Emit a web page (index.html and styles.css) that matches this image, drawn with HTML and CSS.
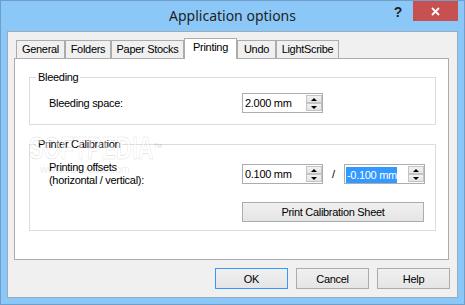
FILE: index.html
```html
<!DOCTYPE html>
<html lang="en">
<head>
    <meta charset="UTF-8">
    <title>Application options</title>
    <link rel="stylesheet" href="styles.css">
</head>
<body>
  <div class="window">
    <!-- Title bar -->
    <div class="titlebar">
      <span></span>
      <div class="title">Application options</div>
      <div class="controls">
        <button class="help-btn">?</button>
        <button class="close-btn">
          <svg width="9" height="9" viewBox="0 0 9 9"><path d="M1 1L8 8M8 1L1 8" stroke="#fff" stroke-width="1.8" fill="none"/></svg>
        </button>
      </div>
    </div>

    <div class="client">
      <div class="tabs">
        <div class="tab tab-general">General</div>
        <div class="tab tab-folders">Folders</div>
        <div class="tab tab-stocks">Paper Stocks</div>
        <div class="tab tab-printing tab-active">Printing</div>
        <div class="tab tab-undo">Undo</div>
        <div class="tab tab-lightscribe">LightScribe</div>
      </div>

      <div class="panel">
        <fieldset class="group group-bleeding">
          <legend>Bleeding</legend>
          <div class="row">
            <label class="field-label">Bleeding space:</label>
            <div class="spin">
              <span class="spin-value">2.000 mm</span>
              <span class="spin-arrows"><span class="spin-btn spin-up"></span><span class="spin-btn spin-down"></span></span>
            </div>
          </div>
        </fieldset>

        <fieldset class="group group-calibration">
          <legend>Printer Calibration</legend>
          <div class="row">
            <label class="field-label field-label-two">Printing offsets<br>(horizontal / vertical):</label>
            <div class="spin">
              <span class="spin-value">0.100 mm</span>
              <span class="spin-arrows"><span class="spin-btn spin-up"></span><span class="spin-btn spin-down"></span></span>
            </div>
            <span class="slash">/</span>
            <div class="spin">
              <span class="spin-value"><span class="selected">-0.100 mm</span></span>
              <span class="spin-arrows"><span class="spin-btn spin-up"></span><span class="spin-btn spin-down"></span></span>
            </div>
          </div>
          <div class="row row-button">
            <button class="btn btn-wide">Print Calibration Sheet</button>
          </div>
        </fieldset>

        <div class="watermark">SOFTPEDIA<span class="tm">™</span></div>
        <div class="watermark-url">www.softpedia.com</div>
      </div>

      <div class="footer">
        <button class="btn btn-default">OK</button>
        <button class="btn">Cancel</button>
        <button class="btn">Help</button>
      </div>
    </div>
  </div>
</body>
</html>
```

FILE: styles.css
```css
* {
    box-sizing: border-box;
}

body {
    margin: 0;
    font-family: "Liberation Sans", Arial, sans-serif;
    font-size: 11px;
    letter-spacing: -0.3px;
    color: #000;
    background: #fff;
}

.window {
    width: 465px;
    height: 305px;
    border: 1px solid #6f9ecb;
    background: #8cc8f7;
    padding: 0 6px 6px;
    display: flex;
    flex-direction: column;
}

.titlebar {
    height: 30px;
    flex: none;
    display: grid;
    grid-template-columns: 1fr auto 1fr;
}

.title {
    font-family: "Noto Sans", sans-serif;
    font-size: 14px;
    letter-spacing: 0;
    line-height: 29px;
    color: #1f1f1f;
}

.controls {
    justify-self: end;
    display: flex;
}

.help-btn {
    width: 30px;
    height: 21px;
    border: 0;
    padding: 0;
    background: none;
    font: bold 14px "Liberation Sans", Arial, sans-serif;
    color: #222;
}

.close-btn {
    width: 45px;
    height: 20px;
    border: 0;
    padding: 0;
    background: #c75050;
    display: flex;
    align-items: center;
    justify-content: center;
}

.client {
    flex: 1;
    background: #f0f0f0;
    border: 1px solid #9aabbb;
    padding: 6px 8px 8px 6px;
    display: flex;
    flex-direction: column;
}

/* tabs */
.tabs {
    display: flex;
    align-items: flex-end;
    height: 20px;
    padding-left: 2px;
    flex: none;
}

.tab {
    height: 18px;
    border: 1px solid #acacac;
    border-bottom: 0;
    background: #f0f0f0;
    line-height: 17px;
    text-align: center;
}

.tab-active {
    height: 21px;
    margin-bottom: -1px;
    background: #fff;
    position: relative;
    z-index: 1;
}

.tab-general { width: 49px; }
.tab-folders { width: 46px; }
.tab-stocks { width: 73px; }
.tab-printing { width: 53px; }
.tab-undo { width: 39px; }
.tab-lightscribe { width: 63px; }

.panel {
    flex: 1;
    background: #fff;
    border: 1px solid #acacac;
    padding: 0 12px 0 14px;
    position: relative;
}

/* group boxes */
.group {
    margin: 12px 0 0;
    padding: 9px 0 8px;
    border: 1px solid #dcdcdc;
    min-width: 0;
}

.group-bleeding {
    margin-top: 11px;
    padding: 8px 0 11px;
}

.group legend {
    padding: 0 2px;
    margin-left: 6px;
    line-height: 15px;
}

.row {
    display: flex;
    align-items: center;
    padding-left: 19px;
}

.field-label {
    width: 193px;
    flex: none;
}

.field-label-two {
    line-height: 13px;
}

.slash {
    width: 21px;
    text-align: center;
}

.row-button {
    margin-top: 15px;
    padding-left: 212px;
}

/* spin boxes */
.spin {
    width: 81px;
    height: 20px;
    flex: none;
    border: 1px solid #abadb3;
    background: #fff;
    display: flex;
}

.spin-value {
    flex: 1;
    padding-left: 2px;
    line-height: 18px;
    white-space: nowrap;
    overflow: hidden;
}

.spin-value .selected {
    display: inline-block;
    margin-left: -1px;
    padding-left: 1px;
    line-height: 16px;
    vertical-align: middle;
    background: #3399ff;
    color: #fff;
}

.spin-arrows {
    width: 16px;
    display: flex;
    flex-direction: column;
    padding: 1px 0;
}

.spin-btn {
    flex: 1;
    border: 1px solid #c4c4c4;
    background: linear-gradient(#f3f3f3, #e3e3e3);
    display: flex;
    align-items: center;
    justify-content: center;
}

.spin-btn::before {
    content: "";
    border-left: 3px solid transparent;
    border-right: 3px solid transparent;
}

.spin-up::before {
    border-bottom: 3px solid #000;
}

.spin-down::before {
    border-top: 3px solid #000;
}

/* buttons */
.btn {
    width: 73px;
    height: 21px;
    padding: 0;
    border: 1px solid #acacac;
    background: linear-gradient(#f0f0f0, #e5e5e5);
    font: inherit;
    letter-spacing: inherit;
    color: #000;
}

.btn-wide {
    width: 182px;
    height: 20px;
}

.btn-default {
    border-color: #3399ff;
}

.footer {
    flex: none;
    display: flex;
    justify-content: flex-end;
    gap: 8px;
    margin-top: 8px;
    margin-right: -1px;
}

/* watermark */
.watermark {
    position: absolute;
    left: 14px;
    top: 73px;
    font: bold 32px "Liberation Sans", Arial, sans-serif;
    letter-spacing: 0;
    line-height: 32px;
    color: rgba(255, 255, 255, 0.5);
    -webkit-text-stroke: 1px rgba(0, 0, 0, 0.1);
    transform: scaleX(0.68);
    transform-origin: left top;
    pointer-events: none;
}

.watermark .tm {
    font-size: 14px;
    vertical-align: top;
    -webkit-text-stroke: 0;
    color: rgba(0, 0, 0, 0.12);
}

.watermark-url {
    position: absolute;
    left: 25px;
    top: 104px;
    color: rgba(0, 0, 0, 0.1);
    pointer-events: none;
}
```
